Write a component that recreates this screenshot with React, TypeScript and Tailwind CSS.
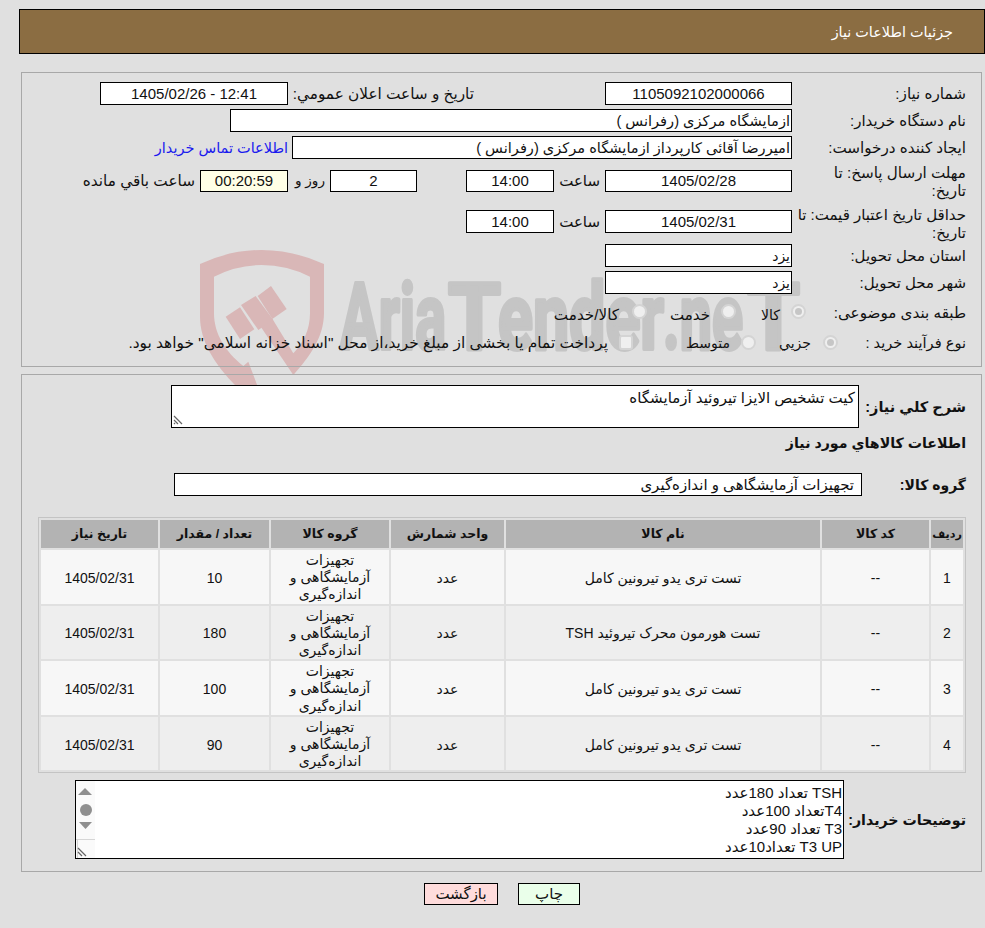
import React from "react";

const FONT = "font-['Liberation_Sans','DejaVu_Sans',sans-serif]";

function Box({ className = "", bg = "bg-white", children }: { className?: string; bg?: string; children?: React.ReactNode }) {
  return (
    <div className={`flex shrink-0 items-center border border-black text-[#111] ${bg} ${className}`}>
      {children}
    </div>
  );
}

function Radio({ checked = false, className = "" }: { checked?: boolean; className?: string }) {
  return (
    <span className={`flex h-[15px] w-[15px] shrink-0 items-center justify-center rounded-full border-2 border-[#d4d4d4] bg-[#efefef] ${className}`}>
      {checked && <span className="h-[7px] w-[7px] rounded-full bg-[#c6c6c6]" />}
    </span>
  );
}

function Resizer() {
  return (
    <svg width="10" height="10" viewBox="0 0 10 10" className="absolute bottom-[2px] left-[1px]">
      <path d="M1 1 L9 9 M1 5 L5 9 M1 8 L2 9" stroke="#666" strokeWidth="1.2" fill="none" />
    </svg>
  );
}

function Mark({ x, w, children }: { x: number; w: number; children: string }) {
  return (
    <text
      x={x}
      y="349"
      fontFamily="Roboto, sans-serif"
      fontWeight="700"
      fontSize="92"
      fill="#c5c5c5"
      stroke="#c5c5c5"
      strokeWidth="4"
      strokeLinejoin="round"
      textLength={w}
      lengthAdjust="spacingAndGlyphs"
      direction="ltr"
      style={{ unicodeBidi: "bidi-override" }}
    >
      {children}
    </text>
  );
}

function Watermark() {
  return (
    <svg width="985" height="928" viewBox="0 0 985 928" className="absolute left-0 top-0">
      <g transform="translate(190 240) scale(0.3333)" fill="#d9b7b7">
        <path d="M30 72 Q120 30 215 30 Q310 30 402 72 L402 220 C402 290 360 350 310 405 L195 235 L248 238 L310 340 C340 310 360 270 360 220 L360 110 Q290 75 215 75 Q140 75 72 110 L72 220 C72 280 105 335 160 378 L175 365 L205 445 L140 440 C70 370 30 300 30 230 Z" />
        <path d="M107 230 L150 202 L193 268 L150 297 Z" />
        <path d="M153 195 L197 168 L250 240 L205 270 Z" />
        <path d="M203 168 L243 138 L290 207 L247 237 Z" />
      </g>
      <Mark x={340} w={106}>Aria</Mark>
      <Mark x={448} w={53}>T</Mark>
      <Mark x={498} w={166}>ender</Mark>
      <Mark x={663} w={80}>.ne</Mark>
      <Mark x={747} w={53}>T</Mark>
    </svg>
  );
}

const rows = [
  { n: "1", name: "تست تری یدو تیرونین کامل", qty: "10", bg: "bg-[#f7f7f7]" },
  { n: "2", name: "تست هورمون محرک تیروئید TSH", qty: "180", bg: "bg-[#eeeeee]" },
  { n: "3", name: "تست تری یدو تیرونین کامل", qty: "100", bg: "bg-[#f7f7f7]" },
  { n: "4", name: "تست تری یدو تیرونین کامل", qty: "90", bg: "bg-[#eeeeee]" },
];

export default function App() {
  return (
    <div dir="rtl" className={`relative h-[928px] w-[985px] overflow-hidden bg-[#e0e0e0] pt-[9px] text-[14px] leading-[18px] text-[#111] ${FONT}`}>
      <Watermark />
      <div className="relative">
        <header className="ml-[1px] mr-[0px] flex h-[45px] w-[966px] items-center border border-black bg-[#8b6d42] pr-[31px] text-[14.4px] text-white">
          جزئیات اطلاعات نیاز
        </header>

        <section className="ml-[3px] mr-[3px] mt-[18px] h-[295px] w-[961px] border border-[#a8a8a8] pt-[9px] pr-[15px]">
          <div className="flex h-[23px] items-center">
            <div className="w-[174px] shrink-0 text-[15.2px]">شماره نیاز:</div>
            <Box className="h-[23px] w-[187px] justify-center text-[15px]">1105092102000066</Box>
            <div className="mr-[131px] w-[181px] shrink-0 whitespace-nowrap text-[15.3px]">تاریخ و ساعت اعلان عمومي:</div>
            <Box className="mr-[5px] h-[23px] w-[188px] justify-center text-[15px]">12:41 - 1405/02/26</Box>
          </div>
          <div className="mt-[4px] flex h-[23px] items-center">
            <div className="w-[174px] shrink-0 text-[15px]">نام دستگاه خریدار:</div>
            <Box className="h-[23px] w-[562px] pr-[1px] text-[14.6px]">ازمایشگاه مرکزی (رفرانس )</Box>
          </div>
          <div className="mt-[4px] flex h-[23px] items-center">
            <div className="w-[174px] shrink-0 text-[15.2px]">ایجاد کننده درخواست:</div>
            <Box className="h-[23px] w-[500px] pr-[1px] text-[14.6px]">امیررضا آقائی کارپرداز ازمایشگاه مرکزی (رفرانس )</Box>
            <a className="mr-[4px] whitespace-nowrap text-[14.5px] text-[#1a1aee]">اطلاعات تماس خریدار</a>
          </div>
          <div className="mt-[5px] flex h-[36px] items-start">
            <div className="w-[150px] shrink-0 text-[15.2px]">مهلت ارسال پاسخ: تا تاریخ:</div>
            <div className="mr-[24px] mt-[6px] flex h-[22px] items-center">
              <Box className="h-[22px] w-[187px] justify-center text-[15px]">1405/02/28</Box>
              <div className="mr-[5px] w-[46px] shrink-0 text-[15px]">ساعت</div>
              <Box className="h-[22px] w-[88px] justify-center text-[15px]">14:00</Box>
              <Box className="mr-[49px] h-[22px] w-[87px] justify-center text-[15px]">2</Box>
              <div className="mr-[5px] w-[37px] shrink-0 text-[13.6px]">روز و</div>
              <Box bg="bg-[#ffffe6]" className="h-[22px] w-[88px] justify-center text-[15px]">00:20:59</Box>
              <div className="mr-[5px] whitespace-nowrap text-[15.3px]">ساعت باقي مانده</div>
            </div>
          </div>
          <div className="mt-[6px] flex h-[36px] items-start">
            <div className="w-[174px] shrink-0 text-[15px]">حداقل تاریخ اعتبار قیمت: تا تاریخ:</div>
            <div className="mt-[4px] flex h-[23px] items-center">
              <Box className="h-[23px] w-[187px] justify-center text-[15px]">1405/02/31</Box>
              <div className="mr-[5px] w-[46px] shrink-0 text-[15px]">ساعت</div>
              <Box className="h-[23px] w-[88px] justify-center text-[15px]">14:00</Box>
            </div>
          </div>
          <div className="mt-[2px] flex h-[23px] items-center">
            <div className="w-[174px] shrink-0 text-[15px]">استان محل تحویل:</div>
            <Box className="h-[23px] w-[187px] pr-[1px]">یزد</Box>
          </div>
          <div className="mt-[4px] flex h-[23px] items-center">
            <div className="w-[174px] shrink-0 text-[15px]">شهر محل تحویل:</div>
            <Box className="h-[23px] w-[187px] pr-[1px]">یزد</Box>
          </div>
          <div className="mt-[9px] flex h-[20px] items-center">
            <div className="w-[160px] shrink-0 whitespace-nowrap text-[15.2px]">طبقه بندی موضوعی:</div>
            <Radio checked className="-mt-[3px]" />
            <div className="mr-[11px] mt-[3px] w-[20px] shrink-0 whitespace-nowrap">کالا</div>
            <Radio className="-mt-[3px] mr-[24px]" />
            <div className="mr-[11px] mt-[3px] w-[40px] shrink-0 whitespace-nowrap text-[15px]">خدمت</div>
            <Radio className="-mt-[3px] mr-[23px]" />
            <div className="mr-[13px] mt-[3px] whitespace-nowrap text-[15.2px]">کالا/خدمت</div>
          </div>
          <div className="mt-[10px] flex h-[20px] items-center">
            <div className="w-[128px] shrink-0 whitespace-nowrap text-[14.6px]">نوع فرآیند خرید :</div>
            <Radio checked className="-mt-[2px]" />
            <div className="mr-[12px] w-[34px] shrink-0 whitespace-nowrap">جزيي</div>
            <Radio className="-mt-[2px] mr-[21px]" />
            <div className="mr-[11px] w-[45px] shrink-0 whitespace-nowrap">متوسط</div>
            <span className="-mt-[2px] mr-[52px] h-[15px] w-[14px] shrink-0 rounded-[3px] border-2 border-[#d4d4d4] bg-[#efefef]" />
            <div className="mr-[11px] whitespace-nowrap text-[15.4px]">پرداخت تمام یا بخشی از مبلغ خرید،از محل "اسناد خزانه اسلامی" خواهد بود.</div>
          </div>
        </section>

        <section className="ml-[3px] mr-[3px] mt-[7px] h-[498px] w-[961px] border border-[#a8a8a8] pt-[10px] pr-[15px]">
          <div className="flex items-center">
            <div className="w-[107px] shrink-0 whitespace-nowrap text-[14.5px] font-bold">شرح كلي نياز:</div>
            <Box className="relative h-[43px] w-[688px] items-start pr-[3px] pt-[3px] text-[15px]">
              کیت تشخیص الایزا تیروئید آزمایشگاه
              <Resizer />
            </Box>
          </div>
          <div className="mt-[6px] h-[20px] text-[14.2px] font-bold">اطلاعات كالاهاي مورد نياز</div>
          <div className="mt-[19px] flex items-center">
            <div className="w-[104px] shrink-0 font-bold">گروه کالا:</div>
            <Box className="h-[23px] w-[688px] pr-[7px] text-[15px]">تجهیزات آزمایشگاهی و اندازه‌گیری</Box>
          </div>

          <div className="mt-[21px] w-[928px] border border-[#c4c4c4]">
            <table className="w-[926px] table-fixed border-separate border-spacing-[2px] text-center">
              <colgroup>
                <col className="w-[32px]" />
                <col className="w-[107px]" />
                <col className="w-[314px]" />
                <col className="w-[113px]" />
                <col className="w-[118px]" />
                <col className="w-[109px]" />
                <col className="w-[117px]" />
              </colgroup>
              <thead>
                <tr className="h-[28px] bg-[#b3b3b3] text-[12.5px] font-bold">
                  <th className="whitespace-nowrap p-0 text-[11.2px]">ردیف</th>
                  <th className="p-0">کد کالا</th>
                  <th className="p-0">نام کالا</th>
                  <th className="p-0">واحد شمارش</th>
                  <th className="p-0">گروه کالا</th>
                  <th className="p-0">تعداد / مقدار</th>
                  <th className="p-0">تاریخ نیاز</th>
                </tr>
              </thead>
              <tbody>
                {rows.map((r) => (
                  <tr key={r.n} className={`h-[53.5px] ${r.bg}`}>
                    <td className="p-0 pt-[2px]">{r.n}</td>
                    <td className="p-0 pt-[2px]">--</td>
                    <td className="p-0 pt-[2px]">{r.name}</td>
                    <td className="p-0 pt-[2px]">عدد</td>
                    <td className="p-0 px-[10px] pt-[2px] leading-[17.2px]">تجهیزات آزمایشگاهی و اندازه‌گیری</td>
                    <td className="p-0 pt-[2px]">{r.qty}</td>
                    <td className="p-0 pt-[2px]">1405/02/31</td>
                  </tr>
                ))}
              </tbody>
            </table>
          </div>

          <div className="mt-[7px] flex items-center">
            <div className="w-[122px] shrink-0 whitespace-nowrap text-[14.2px] font-bold">توضیحات خریدار:</div>
            <Box className="h-[79px] w-[769px] items-stretch">
              <div className="flex-1 pr-[1px] pt-[3px] text-[15px] leading-[18px]">
                <div>TSH تعداد 180عدد</div>
                <div>T4تعداد 100عدد</div>
                <div>T3 تعداد 90عدد</div>
                <div>T3 UP تعداد10عدد</div>
              </div>
              <svg width="19" height="77" viewBox="0 0 19 77" className="shrink-0 bg-[#fafafa]">
                <path d="M2 14 L9 7 L16 14 Z" fill="#8f8f8f" />
                <circle cx="10" cy="29" r="6" fill="#8f8f8f" />
                <path d="M3 41 L16 41 L9.5 48 Z" fill="#8f8f8f" />
                <path d="M0 58.5 H19 M1.5 58.5 V77" stroke="#d6d6d6" />
                <path d="M2 67 L10 75 M2 71 L6 75" stroke="#666" strokeWidth="1.2" />
              </svg>
            </Box>
          </div>
        </section>

        <div className="mt-[11px] flex justify-center pl-[19px]">
          <button className="h-[22px] w-[62px] border border-black bg-[#eaffea] text-[15px]">چاپ</button>
          <button className="mr-[20px] h-[22px] w-[74px] border border-black bg-[#ffdcdc] text-[15px]">بازگشت</button>
        </div>
      </div>
    </div>
  );
}
